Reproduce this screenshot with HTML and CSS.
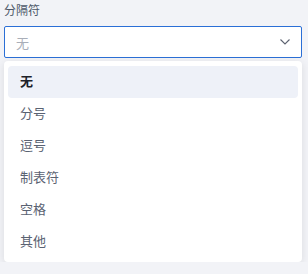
FILE: index.html
```html
<!DOCTYPE html>
<html>
<head>
    <title>分隔符</title>
    <link rel="stylesheet" href="styles.css">
</head>
<body>
    <div class="field">
        <div class="field-label">分隔符</div>
        <div class="select">
            <span class="select-placeholder">无</span>
            <svg class="select-arrow" width="12" height="8" viewBox="0 0 12 8">
                <path d="M1.5 1.5 L6 6 L10.5 1.5" fill="none" stroke="#5c6270" stroke-width="1.1"/>
            </svg>
        </div>
        <ul class="dropdown">
            <li class="option selected">无</li>
            <li class="option">分号</li>
            <li class="option">逗号</li>
            <li class="option">制表符</li>
            <li class="option">空格</li>
            <li class="option">其他</li>
        </ul>
    </div>
</body>
</html>
```

FILE: styles.css
```css
* {
    margin: 0;
    padding: 0;
    box-sizing: border-box;
    font-family: 'Noto Sans', 'Noto Sans CJK SC', sans-serif;
}

body {
    background: #f2f3f7;
}

.field {
    width: 298px;
    margin-left: 4px;
    padding-top: 1px;
}

.field-label {
    font-size: 12px;
    line-height: 20px;
    color: #4e5969;
    margin-bottom: 5px;
}

.select {
    height: 32px;
    background: white;
    border: 1px solid #2b6fd6;
    border-radius: 2px;
    padding: 0 10px 0 11px;
    display: flex;
    align-items: center;
    justify-content: space-between;
}

.select-placeholder {
    font-size: 13px;
    color: #a9aeb8;
}

.dropdown {
    list-style: none;
    margin-top: 3px;
    padding: 5px 4px 4px 4px;
    background: white;
    border-radius: 4px;
    box-shadow: 0 2px 8px rgba(0, 0, 0, 0.1);
}

.option {
    height: 32px;
    line-height: 31px;
    padding: 0 12px;
    font-size: 13px;
    color: #5a6272;
    border-radius: 4px;
}

.option.selected {
    background: #eef1f8;
    color: #1d2129;
    font-weight: 600;
}
```
